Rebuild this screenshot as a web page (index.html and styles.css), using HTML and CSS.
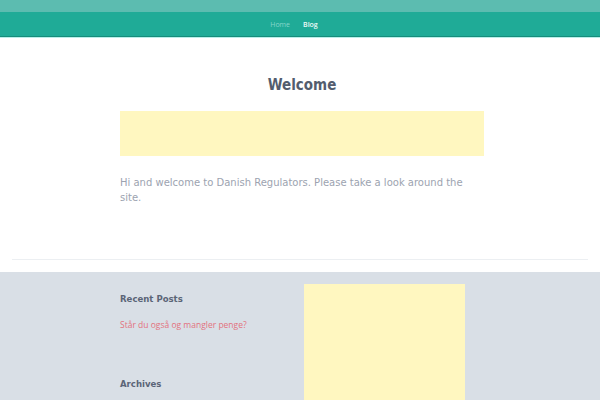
FILE: index.html
```html
<!DOCTYPE html>
<html>
<head>
<meta charset="utf-8">
<link rel="stylesheet" href="styles.css">
</head>
<body>
<div class="topbar"></div>
<nav class="nav">
  <a class="nav-link" href="#">Home</a>
  <a class="nav-link active" href="#">Blog</a>
</nav>
<main class="main">
  <div class="container">
    <h1 class="title">Welcome</h1>
    <div class="ad-banner"></div>
    <p class="intro">Hi and welcome to Danish Regulators. Please take a look around the site.</p>
  </div>
  <hr class="divider">
</main>
<footer class="footer">
  <div class="container footer-grid">
    <div class="widgets">
      <section class="widget">
        <h3 class="widget-title">Recent Posts</h3>
        <a class="widget-link" href="#">Står du også og mangler penge?</a>
      </section>
      <section class="widget">
        <h3 class="widget-title">Archives</h3>
      </section>
    </div>
    <div class="ad-box"></div>
  </div>
</footer>
</body>
</html>
```
FILE: styles.css
```css
html, body {
  margin: 0;
  padding: 0;
  background: #ffffff;
  font-family: "DejaVu Sans", sans-serif;
  font-stretch: condensed;
}
.topbar {
  height: 12px;
  background: #5cbcb0;
}
.nav {
  height: 24px;
  background: #1fab97;
  border-bottom: 1px solid #168c7b;
  box-shadow: 0 1px 0 #b8efe8;
  display: flex;
  justify-content: center;
  align-items: center;
  gap: 13px;
  padding-right: 12px;
}
.nav-link {
  font-family: "Open Sans", sans-serif;
  font-stretch: normal;
  font-size: 7px;
  text-decoration: none;
  color: #86d6cb;
}
.nav-link.active {
  color: #eefaf8;
  font-weight: 600;
}
.container {
  width: 364px;
  margin: 0 auto;
  padding-left: 4px;
}
.main {
  padding-top: 38px;
}
.title {
  margin: 0;
  text-align: center;
  font-size: 15px;
  font-weight: bold;
  color: #535d6e;
  line-height: 20px;
}
.ad-banner {
  margin-top: 16px;
  height: 45px;
  background: #fff7c0;
}
.intro {
  margin: 19px 0 0;
  font-stretch: normal;
  font-size: 10px;
  line-height: 15px;
  color: #9ca3b0;
}
.divider {
  margin: 54px 12px 0;
  border: 0;
  border-top: 1px solid #eceff2;
  height: 0;
}
.footer {
  margin-top: 12px;
  background: #d9dfe6;
  height: 200px;
  padding-top: 12px;
}
.footer-grid {
  display: grid;
  grid-template-columns: 184px 161px;
}
.widget-title {
  margin: 8px 0 0;
  font-size: 9.5px;
  line-height: 14px;
  font-weight: bold;
  color: #5b6577;
}
.widget-link {
  display: block;
  margin-top: 13px;
  font-family: "Open Sans", sans-serif;
  font-stretch: normal;
  font-size: 8.5px;
  line-height: 12px;
  color: #e3727e;
  text-decoration: none;
}
.widget + .widget {
  margin-top: 46px;
}
.ad-box {
  height: 200px;
  background: #fff7c0;
}
```
